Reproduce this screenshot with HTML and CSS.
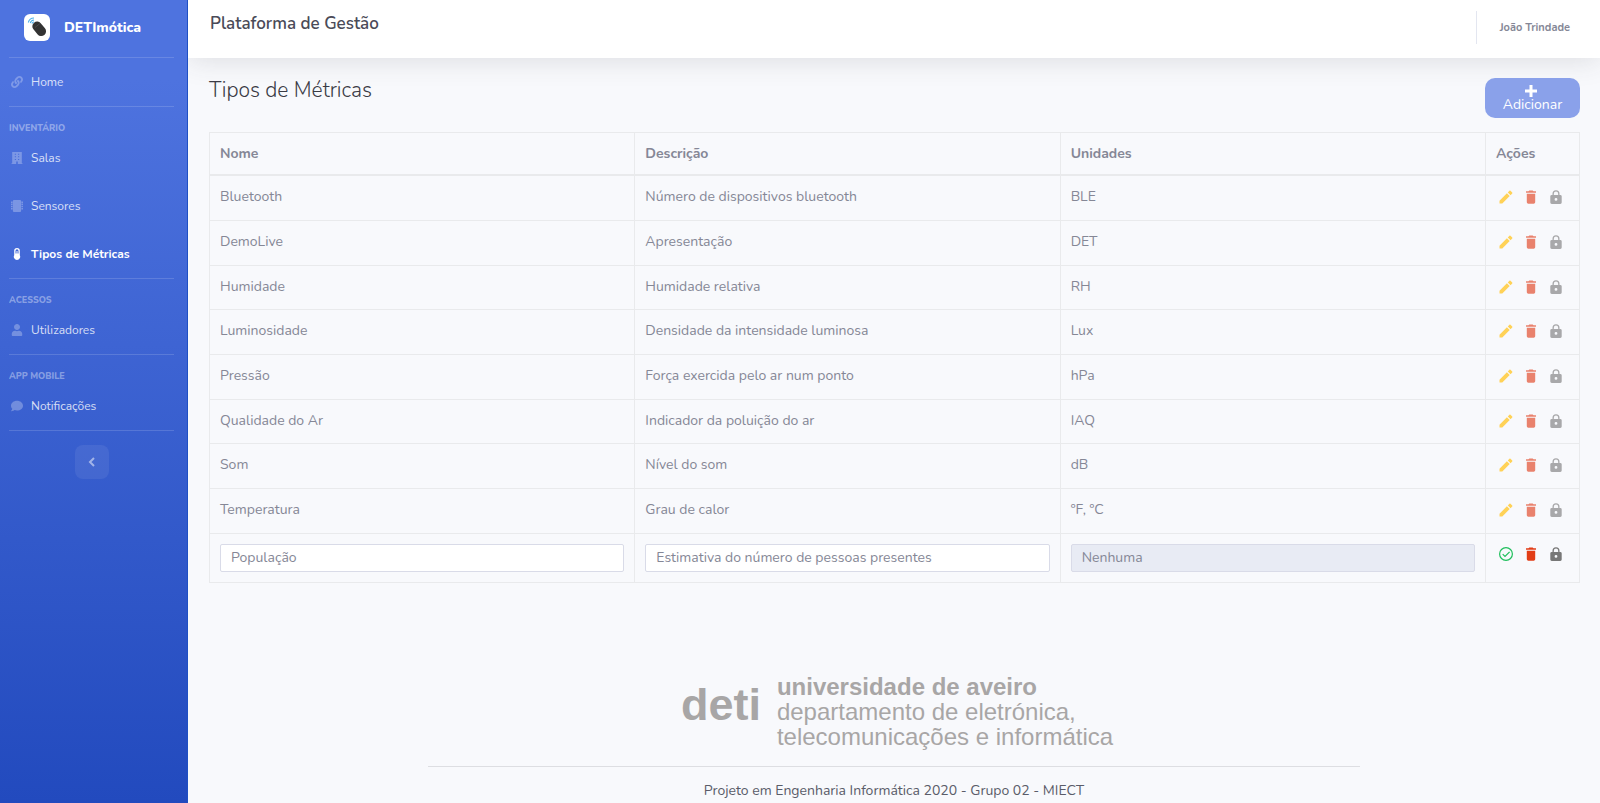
FILE: index.html
```html
<!DOCTYPE html>
<html lang="pt">
<head>
<meta charset="utf-8">
<title>DETImótica</title>
<link rel="stylesheet" href="styles.css">
</head>
<body>
<svg class="sprite" aria-hidden="true">
  <symbol id="pencil" viewBox="0 0 14 14"><path d="M.5 10.700V13.500h2.800L10.700 6.100 7.900 3.300zM13.200 3.600a.8.8 0 0 0 0-1.100L11.500.8a.8.8 0 0 0-1.100 0L8.800 2.400l2.800 2.800z"/></symbol>
  <symbol id="trash" viewBox="0 0 14 14"><path d="M2.800 12.300A1.500 1.500 0 0 0 4.300 13.700h5.400A1.500 1.500 0 0 0 11.200 12.300V3.800H2.800zM12 1.300H9.500L8.700.6H5.300l-.8.700H2v1.500h10z"/></symbol>
  <symbol id="lock" viewBox="0 0 14 14"><path fill-rule="evenodd" d="M11.300 5H10.500V3.700a3.500 3.500 0 0 0-7 0V5H2.700A1.400 1.400 0 0 0 1.300 6.300v6.300A1.400 1.400 0 0 0 2.700 14h8.600a1.400 1.400 0 0 0 1.400-1.400V6.300A1.400 1.400 0 0 0 11.300 5zM7 10.800a1.400 1.400 0 1 1 0-2.800 1.400 1.400 0 0 1 0 2.800zM9.200 5H4.800V3.700a2.200 2.200 0 0 1 4.400 0z"/></symbol>
</svg>
<div class="app">
  <aside class="sidebar">
    <a class="brand" href="#">
      <svg class="brand-logo" viewBox="0 0 26 27" aria-hidden="true"><rect width="26" height="27" rx="6" fill="#fff"/><rect x="10.500" y="7" width="9.500" height="16" rx="4.700" fill="#333" transform="rotate(-40 15 15)"/><path d="M11 13.500l5-4" stroke="#555" stroke-width=".7"/><g fill="none" stroke="#4db1ea" stroke-width="1.100"><path d="M4.300 8.500A6 6 0 0 1 10 4"/><path d="M6.300 9A4 4 0 0 1 10 6"/><path d="M8 9.500A2.500 2.500 0 0 1 10 8"/></g></svg>
      <span>DETImótica</span>
    </a>
    <nav class="menu">
      <section>
        <a class="item" href="#"><svg viewBox="0 0 512 512" aria-hidden="true"><path d="M326.612 185.391c59.747 59.809 58.927 155.698.36 214.590-.11.120-.24.250-.36.370l-67.200 67.200c-59.270 59.270-155.699 59.262-214.960 0-59.270-59.260-59.270-155.700 0-214.960l37.106-37.106c9.840-9.840 26.786-3.300 27.294 10.606.648 17.722 3.826 35.527 9.690 52.721 1.986 5.822.567 12.262-3.783 16.612l-13.087 13.087c-28.026 28.026-28.905 73.660-1.155 101.960 28.024 28.579 74.086 28.749 102.325.510l67.200-67.190c28.191-28.191 28.073-73.757 0-101.830-3.701-3.694-7.429-6.564-10.341-8.569a16.037 16.037 0 0 1-6.947-12.606c-.396-10.567 3.348-21.456 11.698-29.806l21.054-21.055c5.521-5.521 14.182-6.199 20.584-1.731a152.482 152.482 0 0 1 20.522 17.197zM467.547 44.449c-59.261-59.262-155.690-59.270-214.960 0l-67.200 67.200c-.12.120-.25.250-.36.370-58.566 58.892-59.387 154.781.36 214.590a152.454 152.454 0 0 0 20.521 17.196c6.402 4.468 15.064 3.789 20.584-1.731l21.054-21.055c8.350-8.350 12.094-19.239 11.698-29.806a16.037 16.037 0 0 0-6.947-12.606c-2.912-2.005-6.640-4.875-10.341-8.569-28.073-28.073-28.191-73.639 0-101.830l67.200-67.190c28.239-28.239 74.300-28.069 102.325.510 27.750 28.300 26.872 73.934-1.155 101.960l-13.087 13.087c-4.350 4.350-5.769 10.790-3.783 16.612 5.864 17.194 9.042 34.999 9.690 52.721.509 13.906 17.454 20.446 27.294 10.606l37.106-37.106c59.271-59.259 59.271-155.699.001-214.959z"/></svg><span>Home</span></a>
      </section>
      <section>
        <h2>Inventário</h2>
        <a class="item" href="#"><svg viewBox="0 0 12 12" aria-hidden="true"><path fill-rule="evenodd" d="M1.200 0h9.600v11.200h.7V12H6.800V9.500H5.200V12H.5v-.8h.7zM3.800 1.700v1H5v-1zM7 1.700v1h1.200v-1zM3.800 4.300v1H5v-1zM7 4.300v1h1.200v-1zM3.800 6.900v1H5v-1zM7 6.900v1h1.200v-1z"/></svg><span>Salas</span></a>
        <a class="item" href="#"><svg viewBox="0 0 12 12" aria-hidden="true"><path d="M3 0h6a1.100 1.100 0 0 1 1.100 1.100v9.800A1.100 1.100 0 0 1 9 12H3a1.100 1.100 0 0 1-1.100-1.100V1.100A1.100 1.100 0 0 1 3 0zM0 1.400h1.600v1.500H0zM0 3.600h1.600v1.500H0zM0 5.800h1.600v1.500H0zM0 8h1.600v1.500H0zM10.400 1.400H12v1.500h-1.600zM10.400 3.600H12v1.500h-1.600zM10.400 5.800H12v1.500h-1.600zM10.400 8H12v1.500h-1.600z"/></svg><span>Sensores</span></a>
        <a class="item active" href="#"><svg viewBox="0 0 12 12" aria-hidden="true"><path fill-rule="evenodd" d="M3.200 2.800a2.800 2.800 0 0 1 5.600 0v4.400a3.200 3.200 0 1 1-5.600 0zM6 1.300a1.500 1.500 0 0 0-1.500 1.500v2.700h1V3h1v2.500h1V2.800A1.500 1.500 0 0 0 6 1.300z"/></svg><span>Tipos de Métricas</span></a>
      </section>
      <section>
        <h2>Acessos</h2>
        <a class="item" href="#"><svg viewBox="0 0 448 512" aria-hidden="true"><path d="M224 256c70.700 0 128-57.300 128-128S294.700 0 224 0 96 57.300 96 128s57.300 128 128 128zm89.600 32h-16.700c-22.200 10.200-46.900 16-72.900 16s-50.600-5.800-72.900-16h-16.700C60.200 288 0 348.200 0 422.400V464c0 26.500 21.500 48 48 48h352c26.500 0 48-21.500 48-48v-41.600c0-74.200-60.200-134.400-134.400-134.400z"/></svg><span>Utilizadores</span></a>
      </section>
      <section>
        <h2>App Mobile</h2>
        <a class="item" href="#"><svg viewBox="0 0 512 512" aria-hidden="true"><path d="M256 32C114.600 32 0 125.100 0 240c0 49.600 21.400 95 57 130.700C44.500 421.100 2.700 466 2.200 466.500c-2.200 2.300-2.800 5.700-1.500 8.700S4.800 480 8 480c66.300 0 116-31.800 140.600-51.400 32.700 12.300 69 19.400 107.400 19.400 141.400 0 256-93.100 256-208S397.400 32 256 32z"/></svg><span>Notificações</span></a>
      </section>
    </nav>
    <button class="collapse" aria-label="Recolher menu"><svg viewBox="0 0 8 10" aria-hidden="true"><path d="M6 1L2 5l4 4" fill="none" stroke="currentColor" stroke-width="2"/></svg></button>
  </aside>
  <div class="page">
    <header class="topbar"><strong class="platform">Plataforma de Gestão</strong><a class="user" href="#">João Trindade</a></header>
    <main>
      <div class="heading">
        <h1>Tipos de Métricas</h1>
        <button class="add"><svg viewBox="0 0 12 12" aria-hidden="true"><path d="M6 0v12M0 6h12" stroke="currentColor" stroke-width="3"/></svg><span>Adicionar</span></button>
      </div>
      <table>
        <thead><tr><th>Nome</th><th>Descrição</th><th>Unidades</th><th class="actions-col">Ações</th></tr></thead>
        <tbody id="metrics"></tbody>
        <tfoot>
          <tr>
            <td><input aria-label="Nome" value="População"></td>
            <td><input aria-label="Descrição" value="Estimativa do número de pessoas presentes"></td>
            <td><input aria-label="Unidades" value="Nenhuma" disabled></td>
            <td><div class="actions">
              <button class="save" aria-label="Guardar"><svg viewBox="0 0 14 14"><circle cx="7" cy="7" r="6.400"/><path d="M3.700 7.200l2.300 2.300 4.600-4.700"/></svg></button>
              <button class="delete" aria-label="Eliminar"><svg><use href="#trash"/></svg></button>
              <button class="access" aria-label="Acesso"><svg><use href="#lock"/></svg></button>
            </div></td>
          </tr>
        </tfoot>
      </table>
    </main>
    <footer>
      <div class="department">
        <span class="deti">deti</span>
        <p><b>universidade de aveiro</b><br>departamento de eletrónica,<br>telecomunicações e informática</p>
      </div>
      <hr>
      <p class="credits">Projeto em Engenharia Informática 2020 - Grupo 02 - MIECT</p>
    </footer>
  </div>
</div>
<script src="app.js"></script>
</body>
</html>
```
FILE: styles.css
```css
* { box-sizing: border-box; }
body { margin: 0; font-family: Nunito, "Open Sans", sans-serif; font-size: 14px; line-height: 20px; color: #858796; background: #f8f9fc; }
button, input { font: inherit; color: inherit; }
button { border: 0; padding: 0; background: none; cursor: pointer; }
a { color: inherit; text-decoration: none; }
h1, h2, p { margin: 0; }
svg { display: block; fill: currentColor; }
.sprite { display: none; }
.app { display: flex; min-height: 100vh; }

.sidebar { position: relative; z-index: 1; flex: 0 0 188px; padding: 0 13px 0 9px; border-right: 1px solid #1f50c4; color: rgba(255,255,255,.8); background: linear-gradient(180deg, #4e73df 10%, #224abe 100%); }
.brand { display: flex; align-items: center; gap: 14px; height: 57px; padding: 0 0 2px 15px; color: #fff; font-weight: 800; }
.brand-logo { width: 26px; height: 27px; }
.menu section { border-top: 1px solid rgba(255,255,255,.15); }
.menu section:last-child { border-bottom: 1px solid rgba(255,255,255,.15); }
.menu h2 { padding-top: 15px; font-size: 9px; line-height: 12px; font-weight: 800; text-transform: uppercase; color: rgba(255,255,255,.4); }
.item { display: flex; align-items: center; gap: 8px; height: 48px; padding-left: 2px; font-size: 12px; }
.item svg { width: 12px; height: 12px; opacity: .35; }
.active { color: #fff; font-weight: 700; }
.active svg { opacity: 1; }
.collapse { display: grid; place-items: center; width: 34px; height: 34px; margin: 14px 0 0 66px; border-radius: 8px; background: rgba(255,255,255,.07); color: rgba(255,255,255,.5); }
.collapse svg { width: 8px; height: 10px; }

.page { flex: 1; min-width: 0; display: flex; flex-direction: column; }
.topbar { display: flex; justify-content: space-between; height: 58px; padding: 11px 30px 14px 22px; background: #fff; box-shadow: 0 2px 28px rgba(58,59,69,.15); }
.platform { font-size: 17px; line-height: 25px; font-weight: 600; color: #4a4b58; }
.user { padding-left: 23px; border-left: 1px solid #e3e6f0; font-size: 11px; line-height: 33px; font-weight: 700; }
main { padding: 20px 20px 0 21px; }
.heading { display: flex; justify-content: space-between; align-items: flex-start; margin-bottom: 14px; }
h1 { font-size: 21px; line-height: 25px; font-weight: 300; color: #3a3b45; }
.add { display: flex; flex-direction: column; align-items: center; width: 95px; height: 40px; padding-top: 7px; border-radius: 10px; background: #8aa1ea; color: #fff; line-height: 16px; }
.add svg { width: 12px; height: 12px; margin-right: 4px; }

table { width: 100%; border-collapse: collapse; table-layout: fixed; }
th, td { padding: 10px; border: 1px solid #e9eaec; line-height: 22px; text-align: left; vertical-align: top; }
th { height: 42px; padding-bottom: 9px; border-bottom-width: 2px; font-weight: 700; }
tbody tr { height: 45px; }
tbody tr:nth-child(3n) { height: 44px; }
.actions-col { width: 94px; }
input { display: block; width: 100%; height: 28px; padding: 0 10px; border: 1px solid #d9dbe8; border-radius: 2px; background: #fff; }
input:disabled { background: #e8ebf4; }
.actions { display: flex; gap: 11px; padding: 4px 0 0 3px; }
.actions svg { width: 14px; height: 14px; }
.edit { color: #ffd257; }
.delete { color: #e23d16; }
.access { color: #777; }
tbody .delete { color: #e9826d; }
tbody .access { color: #a8a8aa; }
.save { color: #1fbf5c; }
.save svg { fill: none; stroke: currentColor; stroke-width: 1.200; }
tfoot .actions { padding-top: 3px; }

footer { display: flex; flex-direction: column; align-items: center; padding-top: 91px; }
.department { display: flex; align-items: center; gap: 16px; padding-left: 6px; color: #a8a6a6; font-family: "Liberation Sans", Arial, sans-serif; font-size: 24px; line-height: 25px; }
.deti { font-size: 45px; line-height: 48px; font-weight: 700; padding-bottom: 12px; }
hr { width: 66%; margin: 17px 0 14px; border: 0; border-top: 1px solid #dddee2; }
.credits { color: #5a5c69; }
```
FILE: app.js
```js
const metrics = [
  ["Bluetooth", "Número de dispositivos bluetooth", "BLE"],
  ["DemoLive", "Apresentação", "DET"],
  ["Humidade", "Humidade relativa", "RH"],
  ["Luminosidade", "Densidade da intensidade luminosa", "Lux"],
  ["Pressão", "Força exercida pelo ar num ponto", "hPa"],
  ["Qualidade do Ar", "Indicador da poluição do ar", "IAQ"],
  ["Som", "Nível do som", "dB"],
  ["Temperatura", "Grau de calor", "ºF, ºC"]
];
const action = (name, label, icon) =>
  `<button class="${name}" aria-label="${label}"><svg><use href="#${icon}"/></svg></button>`;
document.getElementById("metrics").innerHTML = metrics.map(row =>
  `<tr>${row.map(text => `<td>${text}</td>`).join("")}<td><div class="actions">` +
  action("edit", "Editar", "pencil") + action("delete", "Eliminar", "trash") +
  action("access", "Acesso", "lock") + "</div></td></tr>").join("");
```
